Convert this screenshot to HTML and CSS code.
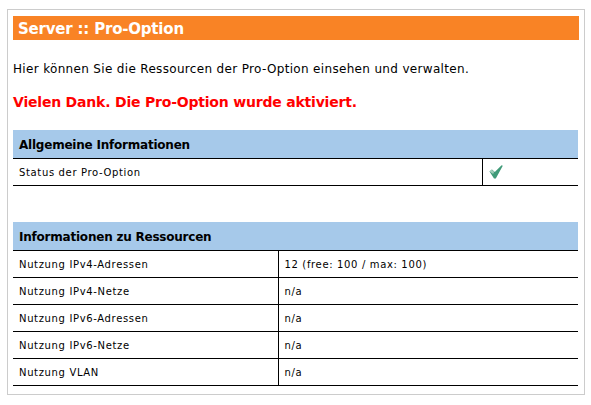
FILE: index.html
```html
<!DOCTYPE html>
<html lang="de">
<head>
    <meta charset="UTF-8">
    <meta name="viewport" content="width=device-width, initial-scale=1.0">
    <title>Server :: Pro-Option</title>
    <link rel="stylesheet" href="styles.css">
</head>
<body>
    <div class="content-box">
        <h1 class="page-title">Server :: Pro-Option</h1>
        <p class="intro">Hier können Sie die Ressourcen der Pro-Option einsehen und verwalten.</p>
        <p class="success">Vielen Dank. Die Pro-Option wurde aktiviert.</p>

        <table class="info-table status-table">
            <colgroup><col class="status-label"><col></colgroup>
            <tr><th colspan="2">Allgemeine Informationen</th></tr>
            <tr>
                <td class="label-cell">Status der Pro-Option</td>
                <td>
                    <svg class="check-icon" width="14" height="14" viewBox="0 0 14 14">
                        <path d="M0.5 6.5 L3 4.5 L5.8 7 L12.6 0.3 L13.8 0.8 L6.8 13.6 L5 13.4 Z" fill="#3f9a78"/>
                        <path d="M0.5 6.5 L2.5 4.6 L5.2 6.8 L4.2 9 Z" fill="#9fcdb9"/>
                    </svg>
                </td>
            </tr>
        </table>

        <table class="info-table resource-table">
            <colgroup><col class="resource-label"><col></colgroup>
            <tr><th colspan="2">Informationen zu Ressourcen</th></tr>
            <tr><td class="label-cell">Nutzung IPv4-Adressen</td><td>12 (free: 100 / max: 100)</td></tr>
            <tr><td class="label-cell">Nutzung IPv4-Netze</td><td>n/a</td></tr>
            <tr><td class="label-cell">Nutzung IPv6-Adressen</td><td>n/a</td></tr>
            <tr><td class="label-cell">Nutzung IPv6-Netze</td><td>n/a</td></tr>
            <tr><td class="label-cell">Nutzung VLAN</td><td>n/a</td></tr>
        </table>
    </div>
</body>
</html>
```

FILE: styles.css
```css
body {
    margin: 0;
    background-color: #fff;
    font-family: "DejaVu Sans", Verdana, sans-serif;
    color: #000;
}
.content-box {
    box-sizing: border-box;
    width: 578px;
    height: 386px;
    margin: 9px 0 0 7px;
    padding: 6px 5px;
    border: 1px solid #ccc;
}
.page-title {
    margin: 0;
    height: 24px;
    padding-left: 5px;
    background-color: #f98325;
    color: #fff;
    font-size: 15px;
    font-weight: bold;
    letter-spacing: -0.2px;
    line-height: 26px;
}
.intro {
    margin: 22px 0 0;
    font-size: 12px;
    letter-spacing: 0.33px;
    line-height: 14px;
}
.success {
    margin: 18px 0 0;
    color: #f00;
    font-size: 14px;
    font-weight: bold;
    letter-spacing: -0.2px;
    line-height: 17px;
}
.info-table {
    width: 565px;
    border-collapse: collapse;
    table-layout: fixed;
}
.status-table {
    margin-top: 19px;
}
.resource-table {
    margin-top: 36px;
}
.status-label {
    width: 469px;
}
.resource-label {
    width: 265px;
}
.info-table th {
    height: 27px;
    padding: 1px 6px 0;
    background-color: #a6c9ea;
    border-bottom: 1px solid #000;
    font-size: 12px;
    font-weight: bold;
    letter-spacing: -0.22px;
    text-align: left;
}
.info-table td {
    height: 25px;
    padding: 1px 6px 0;
    border-bottom: 1px solid #000;
    font-size: 10px;
    letter-spacing: 0.65px;
}
.label-cell {
    border-right: 1px solid #000;
}
.check-icon {
    display: block;
    margin-top: -1px;
}
```
